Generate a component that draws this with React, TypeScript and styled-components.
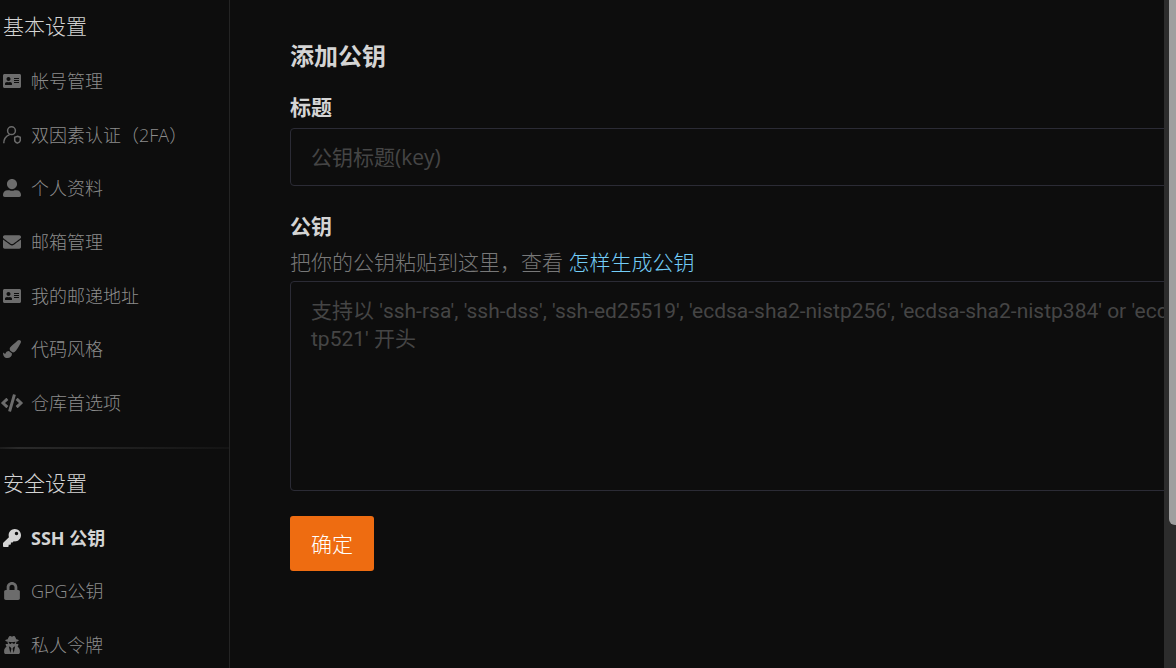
import React from "react";
import styled, { createGlobalStyle } from "styled-components";
import {
  FaAddressCard,
  FaUserAlt,
  FaEnvelope,
  FaPaintBrush,
  FaCode,
  FaKey,
  FaLock,
  FaUserSecret,
} from "react-icons/fa";

const GlobalStyle = createGlobalStyle`
  * { box-sizing: border-box; }
  body {
    margin: 0;
    background: #0d0d0d;
    color: #d4d4d4;
    font-family: "Open Sans", "Noto Sans CJK SC", sans-serif;
    font-size: 21px;
  }
`;

const Shell = styled.div`
  display: flex;
  height: 100vh;
  overflow: hidden;
`;

const Sidebar = styled.nav`
  flex: 0 0 230px;
  border-right: 1px solid #242424;
`;

const GroupTitle = styled.h2`
  margin: 0;
  padding: 0 0 2px 3px;
  font-size: 21px;
  font-weight: 300;
  line-height: 52px;
`;

const Menu = styled.ul<{ $height: number }>`
  display: grid;
  grid-auto-rows: 1fr;
  height: ${(p) => p.$height}px;
  margin: 0;
  padding: 0;
  list-style: none;
`;

const MenuLink = styled.a<{ $active?: boolean }>`
  display: flex;
  align-items: center;
  gap: 10px;
  height: 100%;
  padding-left: 3px;
  color: ${(p) => (p.$active ? "#d4d4d4" : "#8c8c8c")};
  font-size: 18px;
  font-weight: ${(p) => (p.$active ? 700 : 300)};
  line-height: 24px;
  text-decoration: none;
  white-space: nowrap;
`;

const IconSlot = styled.span<{ $active?: boolean }>`
  display: flex;
  flex: none;
  width: 18px;
  justify-content: center;
  color: ${(p) => (p.$active ? "#d4d4d4" : "#6c6c6c")};

  svg {
    flex: none;
  }
`;

const Divider = styled.hr`
  height: 2px;
  margin: 17px 0 8px;
  border: 0;
  background: linear-gradient(90deg, #1c1c1c, #2a2a2a 8%, #141414);
`;

const Main = styled.main`
  flex: 1;
  min-width: 0;
  overflow: hidden;
  padding: 39px 0 0 60px;
`;

const Title = styled.h1`
  margin: 0 0 19px;
  font-size: 24px;
  line-height: 34px;
`;

const Field = styled.div`
  margin-bottom: 25px;
`;

const Label = styled.label`
  display: block;
  margin-bottom: 6px;
  font-weight: 700;
  line-height: 30px;
`;

const Help = styled.p`
  margin: 0 0 4px;
  color: #787878;
  font-weight: 300;
  line-height: 30px;
`;

const HelpLink = styled.a`
  color: #74cdf8;
  text-decoration: none;
`;

const controlStyle = `
  display: block;
  width: calc(100% + 137px);
  border: 1px solid #2b2b35;
  border-radius: 4px;
  background: transparent;
  color: #d4d4d4;
  font: inherit;
  outline: none;

  &::placeholder {
    color: #454545;
    opacity: 1;
  }
`;

const TextInput = styled.input`
  ${controlStyle}
  height: 58px;
  padding: 0 20px;
`;

const TextArea = styled.textarea`
  ${controlStyle}
  height: 210px;
  padding: 15px 20px;
  font-family: Roboto, "Noto Sans CJK SC", sans-serif;
  line-height: 28px;
  word-break: break-all;
  resize: none;
`;

const Submit = styled.button`
  height: 55px;
  padding: 0 21px 2px;
  border: 0;
  border-radius: 3px;
  background: #ee6c11;
  color: #fff;
  font: inherit;
  font-weight: 300;
`;

const ScrollTrack = styled.div`
  display: flex;
  justify-content: flex-end;
  flex: 0 0 12px;
  background: #2c2c2c;
`;

const ScrollThumb = styled.div`
  width: 7px;
  height: 525px;
  border-radius: 0 0 0 6px;
  background: #9f9f9f;
`;

function UserShieldIcon() {
  return (
    <svg width="18" height="18" viewBox="0 0 18 18" fill="none" stroke="currentColor" strokeWidth="1.5">
      <circle cx="8.500" cy="4.700" r="3.900" />
      <path d="M.8 17.300c0-4.300 2.200-7.300 5.800-8.700" />
      <path d="M14.500 10.300l2.800 1v2.900c0 1.500-1.100 2.300-2.800 2.900-1.700-.6-2.800-1.400-2.800-2.900v-2.900z" />
    </svg>
  );
}

type Item = { label: string; icon: React.ReactNode; active?: boolean };

const basicItems: Item[] = [
  { label: "帐号管理", icon: <FaAddressCard /> },
  { label: "双因素认证（2FA）", icon: <UserShieldIcon /> },
  { label: "个人资料", icon: <FaUserAlt /> },
  { label: "邮箱管理", icon: <FaEnvelope /> },
  { label: "我的邮递地址", icon: <FaAddressCard /> },
  { label: "代码风格", icon: <FaPaintBrush /> },
  { label: "仓库首选项", icon: <FaCode size={22} /> },
];

const securityItems: Item[] = [
  { label: "SSH 公钥", icon: <FaKey />, active: true },
  { label: "GPG公钥", icon: <FaLock /> },
  { label: "私人令牌", icon: <FaUserSecret /> },
];

function MenuList({ items, height }: { items: Item[]; height: number }) {
  return (
    <Menu $height={height}>
      {items.map((item) => (
        <li key={item.label}>
          <MenuLink href="#" $active={item.active}>
            <IconSlot $active={item.active}>{item.icon}</IconSlot>
            {item.label}
          </MenuLink>
        </li>
      ))}
    </Menu>
  );
}

export default function App() {
  return (
    <>
      <GlobalStyle />
      <Shell>
        <Sidebar>
          <GroupTitle>基本设置</GroupTitle>
          <MenuList items={basicItems} height={376} />
          <Divider />
          <GroupTitle>安全设置</GroupTitle>
          <MenuList items={securityItems} height={161} />
        </Sidebar>
        <Main>
          <Title>添加公钥</Title>
          <form>
            <Field>
              <Label htmlFor="key-title">标题</Label>
              <TextInput id="key-title" type="text" placeholder="公钥标题(key)" />
            </Field>
            <Field>
              <Label htmlFor="key-body">公钥</Label>
              <Help>
                把你的公钥粘贴到这里，查看 <HelpLink href="#">怎样生成公钥</HelpLink>
              </Help>
              <TextArea
                id="key-body"
                placeholder="支持以 'ssh-rsa', 'ssh-dss', 'ssh-ed25519', 'ecdsa-sha2-nistp256', 'ecdsa-sha2-nistp384' or 'ecdsa-sha2-nistp521' 开头"
              />
            </Field>
            <Submit type="button">确定</Submit>
          </form>
        </Main>
        <ScrollTrack>
          <ScrollThumb />
        </ScrollTrack>
      </Shell>
    </>
  );
}
